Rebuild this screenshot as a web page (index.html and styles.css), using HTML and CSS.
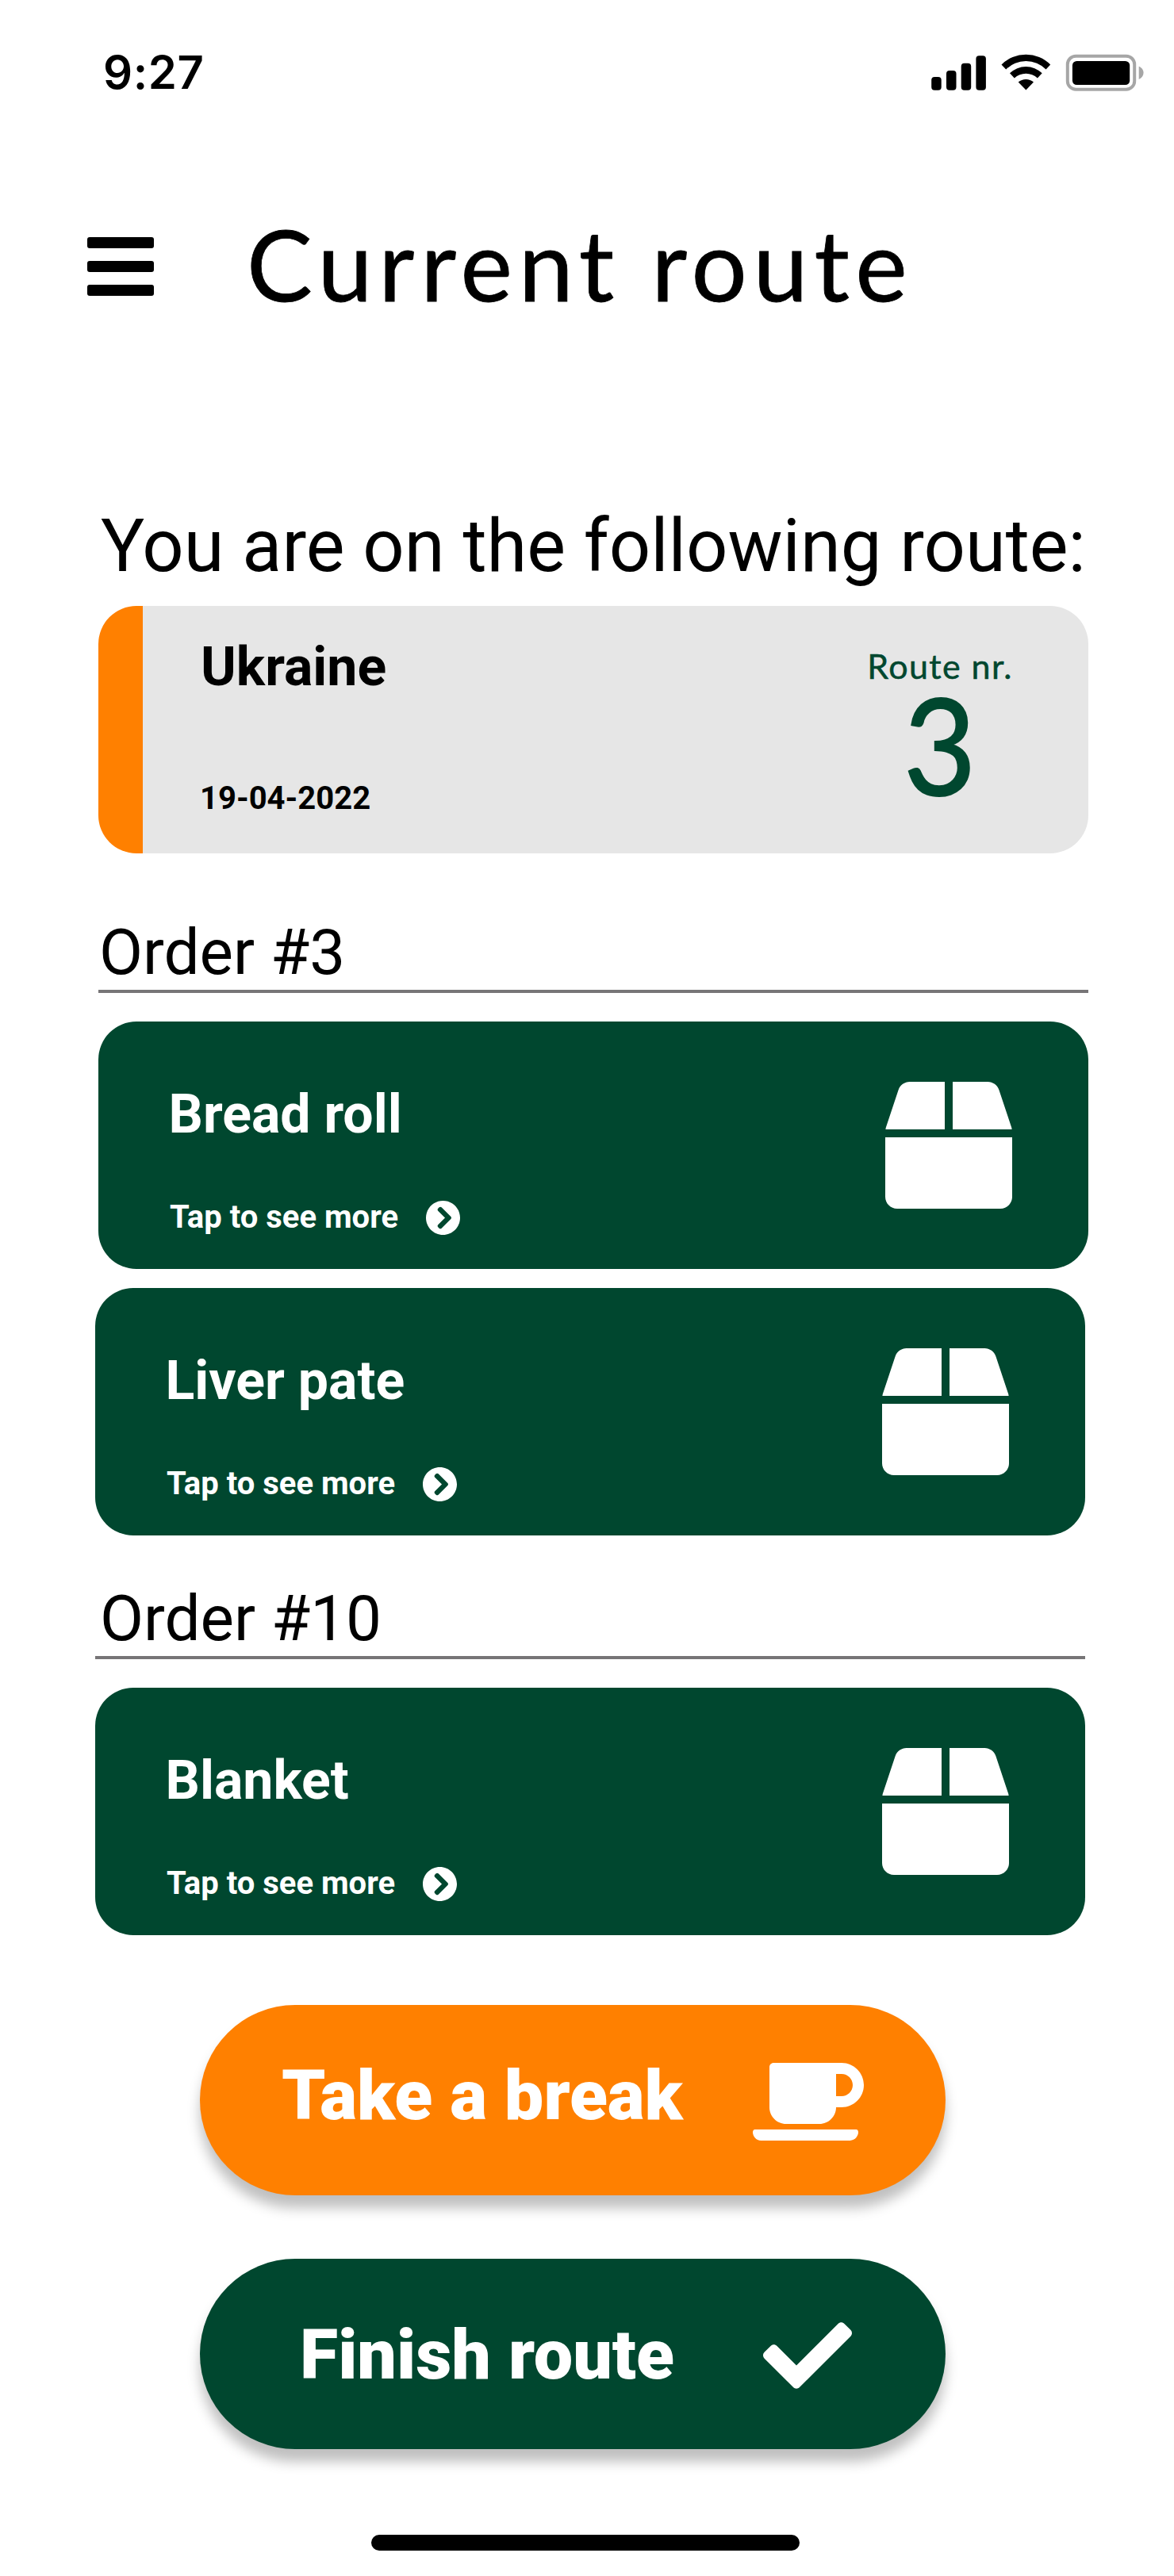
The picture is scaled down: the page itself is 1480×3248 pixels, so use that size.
FILE: index.html
```html
<!DOCTYPE html>
<html lang="en">
<head>
<meta charset="utf-8">
<title>Current route</title>
<link rel="stylesheet" href="styles.css">
</head>
<body>
<svg class="sprite" aria-hidden="true">
  <symbol id="box" viewBox="0 0 512 512"><path d="M509.500 184.600L458.900 32.800C452.400 13.200 434.100 0 413.400 0H272v192h238.700c-.4-2.500-.4-5-1.200-7.400zM240 0H98.600c-20.700 0-39 13.200-45.500 32.800L2.500 184.600c-.8 2.400-.8 4.900-1.200 7.400H240V0zM0 224v240c0 26.500 21.500 48 48 48h416c26.500 0 48-21.500 48-48V224H0z"/></symbol>
  <symbol id="chevron" viewBox="8 8 496 496"><path d="M256 8c137 0 248 111 248 248S393 504 256 504 8 393 8 256 119 8 256 8zm113.900 231L234.400 103.500c-9.400-9.400-24.600-9.400-33.900 0l-17 17c-9.400 9.400-9.400 24.600 0 33.900L285.100 256 183.500 357.600c-9.400 9.400-9.400 24.600 0 33.900l17 17c9.400 9.400 24.600 9.400 33.900 0L369.900 273c9.400-9.400 9.400-24.600 0-34z"/></symbol>
</svg>

<div class="status">
  <span class="time">9:27</span>
  <svg class="status-icons" viewBox="0 0 268 48">
    <rect x="0.200" y="29" width="12.500" height="16.700" rx="4"/>
    <rect x="19" y="21" width="12.500" height="24.700" rx="4"/>
    <rect x="37.700" y="11.700" width="12.500" height="34" rx="4"/>
    <rect x="56.400" y="2.300" width="12.500" height="43.400" rx="4"/>
    <path d="M88.500 13.500A43.500 43.500 0 0 1 150.200 13.500L144.600 19.600A35.500 35.500 0 0 0 94.200 19.600Z"/>
    <path d="M99 24.300A29 29 0 0 1 139.700 24.300L133.900 30.500A21 21 0 0 0 104.800 30.500Z"/>
    <path d="M109.700 35.600A14.500 14.500 0 0 1 129 35.600L119.400 45.500Z"/>
    <rect class="battery-edge" x="171.800" y="2.700" width="84.400" height="42" rx="10.500"/>
    <rect x="177.900" y="9" width="72.300" height="30" rx="5.500"/>
    <path class="battery-cap" d="M261.700 15.700C269.500 18.500 269.500 29 261.700 32Z"/>
  </svg>
</div>

<header class="header">
  <svg class="menu" viewBox="0 0 84 74">
    <rect width="84" height="14" rx="3"/>
    <rect y="30" width="84" height="14" rx="3"/>
    <rect y="60" width="84" height="14" rx="3"/>
  </svg>
  <h1 class="title">Current route</h1>
</header>

<main class="content">
  <p class="intro">You are on the following route:</p>
  <section class="route">
    <div class="route-text">
      <h2 class="name">Ukraine</h2>
      <p class="small">19-04-2022</p>
    </div>
    <div class="route-number">
      <span class="label">Route nr.</span>
      <span class="number">3</span>
    </div>
  </section>

  <h2 class="order">Order #3</h2>
  <article class="item">
    <div class="item-text">
      <h3 class="name">Bread roll</h3>
      <p class="small more">Tap to see more <svg class="chevron"><use href="#chevron"/></svg></p>
    </div>
    <svg class="box"><use href="#box"/></svg>
  </article>
  <article class="item shifted">
    <div class="item-text">
      <h3 class="name">Liver pate</h3>
      <p class="small more">Tap to see more <svg class="chevron"><use href="#chevron"/></svg></p>
    </div>
    <svg class="box"><use href="#box"/></svg>
  </article>

  <h2 class="order order-next shifted">Order #10</h2>
  <article class="item shifted">
    <div class="item-text">
      <h3 class="name">Blanket</h3>
      <p class="small more">Tap to see more <svg class="chevron"><use href="#chevron"/></svg></p>
    </div>
    <svg class="box"><use href="#box"/></svg>
  </article>
</main>

<div class="actions">
  <button class="action break"><span>Take a break</span>
    <svg class="cup" viewBox="0 0 640 512"><path d="M192 384h192c53 0 96-43 96-96h32c70.600 0 128-57.400 128-128S582.600 32 512 32H120c-13.300 0-24 10.700-24 24v232c0 53 43 96 96 96zM512 96c35.300 0 64 28.700 64 64s-28.700 64-64 64h-32V96h32zm47.700 384H48.300c-47.600 0-61-64-36-64h583.300c25 0 11.800 64-35.900 64z"/></svg>
  </button>
  <button class="action finish"><span>Finish route</span>
    <svg class="check" viewBox="0 0 512 512"><path d="M173.898 439.404l-166.400-166.400c-9.997-9.997-9.997-26.206 0-36.204l36.203-36.204c9.997-9.998 26.207-9.998 36.204 0L192 312.690 432.095 72.596c9.997-9.997 26.207-9.997 36.204 0l36.203 36.204c9.997 9.997 9.997 26.206 0 36.204l-294.400 294.401c-9.998 9.997-26.207 9.997-36.204-.001z"/></svg>
  </button>
</div>
<div class="home-bar"></div>
</body>
</html>
```
FILE: styles.css
```css
* { box-sizing: border-box; margin: 0; padding: 0; }

body {
  display: flex;
  flex-direction: column;
  width: 1480px;
  height: 3248px;
  background: #fff;
  color: #000;
  font-family: Roboto, sans-serif;
}

svg { display: block; flex: none; fill: currentColor; }
.sprite { width: 0; height: 0; }

.status {
  display: flex;
  justify-content: space-between;
  height: 180px;
  padding: 61px 38px 0 130px;
}
.time {
  font: 600 58px/60px Inter, sans-serif;
  letter-spacing: 0.6px;
  white-space: nowrap;
}
.status-icons { width: 268px; height: 48px; margin-top: 7px; }
.battery-edge { fill: none; stroke: #a6a6a6; stroke-width: 4; }
.battery-cap { fill: #a6a6a6; }

.header {
  display: flex;
  margin-top: 96px;
  padding-left: 110px;
}
.menu { width: 84px; height: 74px; margin-top: 23px; }
.title {
  margin-left: 117px;
  font: 400 124px/112px Lato, sans-serif;
  letter-spacing: 7.7px;
  -webkit-text-stroke: 0.8px currentColor;
  white-space: nowrap;
}

.content {
  display: flex;
  flex-direction: column;
  width: 1248px;
  margin: 251px 0 0 124px;
}
.intro {
  padding-left: 3px;
  font-size: 92px;
  line-height: 100px;
  white-space: nowrap;
}
.route {
  display: flex;
  justify-content: space-between;
  height: 312px;
  margin-top: 25px;
  padding: 37px 96px 0 73px;
  border-left: 56px solid #ff8000;
  border-radius: 48px;
  background: #e6e6e6;
}
.name { font-size: 68px; font-weight: 700; line-height: 80px; white-space: nowrap; }
.small { font-size: 40px; font-weight: 700; line-height: 48px; white-space: nowrap; }
.route-text .small { margin: 102px 0 0 -1px; }
.route-number {
  display: flex;
  flex-direction: column;
  align-items: center;
  width: 182px;
  color: #00472f;
  font-family: Lato, sans-serif;
}
.label {
  margin-top: 15px;
  font-size: 43px;
  line-height: 48px;
  letter-spacing: 1.4px;
  -webkit-text-stroke: 0.5px currentColor;
  white-space: nowrap;
}
.number {
  font-size: 168px;
  line-height: 149px;
  -webkit-text-stroke: 2px currentColor;
  transform: scaleX(0.94);
}

.order {
  height: 92px;
  margin: 84px 0 36px;
  padding-left: 1px;
  border-bottom: 4px solid #777577;
  font-size: 80px;
  font-weight: 400;
  line-height: 83px;
  white-space: nowrap;
}
.order-next { margin-top: 64px; padding-left: 6px; }
.shifted { position: relative; left: -4px; }

.item {
  display: flex;
  justify-content: space-between;
  height: 312px;
  padding: 76px 96px 0 88px;
  border-radius: 48px;
  background: #00472f;
  color: #fff;
}
.item + .item { margin-top: 24px; }
.item .name { margin: 1px 0 0 0.5px; }
.item .more {
  display: flex;
  align-items: center;
  justify-content: space-between;
  width: 366px;
  margin: 66px 0 0 2px;
}
.chevron { width: 43px; height: 43px; }
.box { width: 160px; height: 160px; }

.actions {
  display: flex;
  flex-direction: column;
  gap: 80px;
  width: 940px;
  margin: 88px 0 0 252px;
}
.action {
  display: flex;
  justify-content: space-between;
  height: 240px;
  border: 0;
  border-radius: 120px;
  box-shadow: 0 16px 16px rgba(0, 0, 0, 0.25);
  color: #fff;
  font: 900 88px/100px Roboto, sans-serif;
  white-space: nowrap;
}
.break { padding: 64px 103px 0 103px; background: #ff8000; }
.finish { padding: 64px 118px 0 126px; background: #00472f; }
.cup { width: 140px; height: 112px; margin-top: 2px; }
.check { width: 112px; height: 112px; margin-top: 2px; }
.finish span { margin-top: 7px; }

.home-bar {
  width: 540px;
  height: 20px;
  margin: 108px 0 0 468px;
  border-radius: 10px;
  background: #000;
}
```
